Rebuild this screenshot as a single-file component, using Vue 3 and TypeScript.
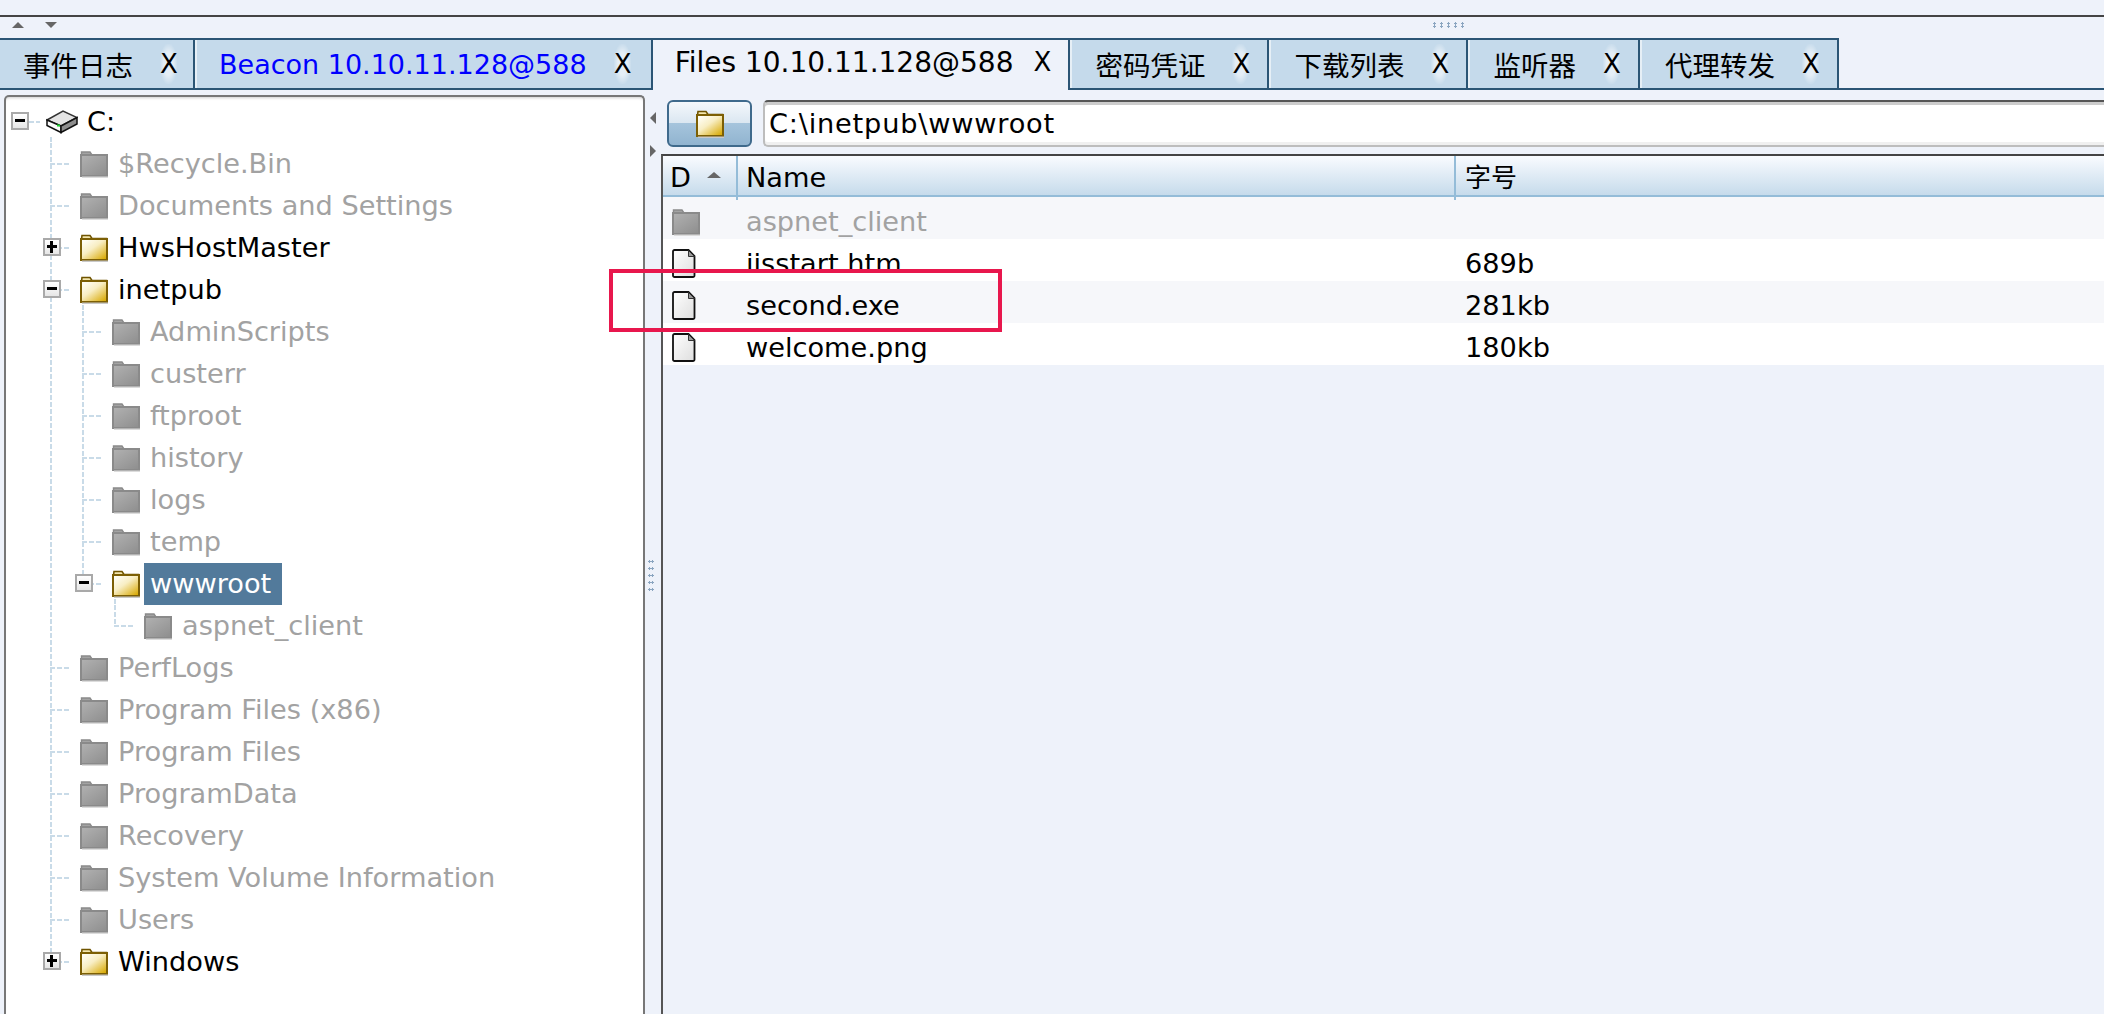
<script setup lang="ts">
interface TreeRow { name: string; level: number; active?: boolean; toggle?: '+' | '-'; selected?: boolean; drive?: boolean }
const rows: TreeRow[] = [
  { name: 'C:', level: 0, active: true, toggle: '-', drive: true },
  { name: '$Recycle.Bin', level: 1 },
  { name: 'Documents and Settings', level: 1 },
  { name: 'HwsHostMaster', level: 1, active: true, toggle: '+' },
  { name: 'inetpub', level: 1, active: true, toggle: '-' },
  { name: 'AdminScripts', level: 2 },
  { name: 'custerr', level: 2 },
  { name: 'ftproot', level: 2 },
  { name: 'history', level: 2 },
  { name: 'logs', level: 2 },
  { name: 'temp', level: 2 },
  { name: 'wwwroot', level: 2, active: true, toggle: '-', selected: true },
  { name: 'aspnet_client', level: 3 },
  { name: 'PerfLogs', level: 1 },
  { name: 'Program Files (x86)', level: 1 },
  { name: 'Program Files', level: 1 },
  { name: 'ProgramData', level: 1 },
  { name: 'Recovery', level: 1 },
  { name: 'System Volume Information', level: 1 },
  { name: 'Users', level: 1 },
  { name: 'Windows', level: 1, active: true, toggle: '+' },
]
const tabs = [
  { label: '事件日志', cjk: true, first: true },
  { label: 'Beacon 10.10.11.128@588', blue: true },
  { label: 'Files 10.10.11.128@588', current: true },
  { label: '密码凭证', cjk: true },
  { label: '下载列表', cjk: true },
  { label: '监听器', cjk: true },
  { label: '代理转发', cjk: true },
]
const files = [
  { name: 'aspnet_client', size: '', folder: true },
  { name: 'iisstart.htm', size: '689b' },
  { name: 'second.exe', size: '281kb' },
  { name: 'welcome.png', size: '180kb' },
]
function indent(r: TreeRow) { return { paddingLeft: (r.level === 0 ? 46 : 74 + (r.level - 1) * 32) + 'px' } }
function hLine(r: TreeRow) {
  const l = r.level === 0 ? 23 : 12 + 32 * r.level
  return { left: l + 'px', width: (r.level === 0 ? 11 : 21) + 'px' }
}
function toggleAt(r: TreeRow) { return { left: (r.level === 0 ? 5 : 5 + 32 * r.level) + 'px' } }
function guides(i: number) {
  const out: { left: string; top: string; height: string }[] = []
  const at = (x: number, top: number, h: number) => out.push({ left: x + 'px', top: top + 'px', height: h + 'px' })
  if (i >= 1 && i <= 20) at(44, 0, i === 20 ? 21 : 42)
  if (i === 0) at(44, 36, 6)
  if (i >= 5 && i <= 11) at(76, 0, i === 11 ? 21 : 42)
  if (i === 4) at(76, 36, 6)
  if (i === 12) at(108, 0, 21)
  if (i === 11) at(108, 36, 6)
  return out
}
</script>

<template>
  <div class="app">
    <svg class="defs" width="0" height="0" aria-hidden="true">
      <defs>
        <linearGradient id="gold" x1="0.1" y1="0.1" x2="0.9" y2="1">
          <stop offset="0" stop-color="#fffef5" />
          <stop offset="0.4" stop-color="#f8eec4" />
          <stop offset="1" stop-color="#d8a800" />
        </linearGradient>
        <linearGradient id="gray" x1="0.1" y1="0" x2="0.9" y2="1">
          <stop offset="0" stop-color="#b0b0b0" />
          <stop offset="1" stop-color="#8f8f8f" />
        </linearGradient>
        <linearGradient id="paper" x1="0" y1="0" x2="1" y2="1">
          <stop offset="0" stop-color="#ffffff" />
          <stop offset="1" stop-color="#dedede" />
        </linearGradient>
        <symbol id="folder-on" viewBox="0 0 28 28">
          <path d="M2 1.500h8l2 3h14.500v1H1.500z" fill="#f3e6ae" stroke="#6f5400" stroke-width="1.600" />
          <rect x="1" y="5" width="26" height="21" fill="url(#gold)" stroke="#7c5f05" stroke-width="2" />
          <rect x="2" y="26.500" width="26" height="1.500" fill="#c9c9c9" />
        </symbol>
        <symbol id="folder-off" viewBox="0 0 28 28">
          <path d="M1.500 6V2h8.500l2 3z" fill="#a3a3a3" stroke="#8a8a8a" stroke-width="1.400" />
          <rect x="1" y="5" width="26" height="21" fill="url(#gray)" stroke="#8a8a8a" stroke-width="2" />
          <rect x="2" y="26.500" width="26" height="1.500" fill="#dcdcdc" />
        </symbol>
        <symbol id="file" viewBox="0 0 24 29">
          <path d="M2.500 1h14l6 6v19.500a1.500 1.500 0 0 1-1.500 1.500H2.500A1.500 1.500 0 0 1 1 26.500V2.500A1.500 1.500 0 0 1 2.500 1z" fill="url(#paper)" stroke="#111" stroke-width="1.800" />
          <path d="M16.500 1.500v6h6z" fill="#999" stroke="#333" stroke-width="1" />
        </symbol>
        <symbol id="drive" viewBox="0 0 32 24">
          <polygon points="1,10 17,1 31,7.500 15,16" fill="#e4e4e4" stroke="#333" stroke-width="1.500" />
          <polygon points="1,10 15,16 15,22.500 1,15.500" fill="#fafafa" stroke="#111" stroke-width="1.500" />
          <polygon points="15,16 31,7.500 31,14 15,22.500" fill="#8d8d8d" stroke="#111" stroke-width="1.500" />
          <rect x="11" y="14.500" width="3" height="2" fill="#18d02a" />
        </symbol>
      </defs>
    </svg>

    <div class="topbar"></div>

    <div class="gripbar">
      <span class="tri up"></span>
      <span class="tri down"></span>
      <span class="hgrip"></span>
    </div>

    <div class="tabstrip">
      <div
        v-for="t in tabs"
        :key="t.label"
        class="tab"
        :class="{ current: t.current, first: t.first, blue: t.blue, cjk: t.cjk }"
      >
        <span class="tab-label">{{ t.label }}</span>
        <span class="tab-x">X</span>
      </div>
    </div>

    <div class="body">
      <div class="tree">
        <div v-for="(r, i) in rows" :key="r.name + i" class="row" :style="indent(r)">
          <span v-for="(g, j) in guides(i)" :key="j" class="vline" :style="g"></span>
          <span class="hline" :style="hLine(r)"></span>
          <span v-if="r.toggle" class="toggle" :style="toggleAt(r)">
            <span class="dash"></span>
            <span v-if="r.toggle === '+'" class="bar"></span>
          </span>
          <svg v-if="r.drive" class="drive-ico"><use href="#drive" /></svg>
          <svg v-else class="folder-ico"><use :href="r.active ? '#folder-on' : '#folder-off'" /></svg>
          <span class="row-name" :class="{ off: !r.active, sel: r.selected, root: r.drive }">{{ r.name }}</span>
        </div>
      </div>

      <div class="splitter">
        <span class="arr left"></span>
        <span class="arr right"></span>
        <span class="vgrip"></span>
      </div>

      <div class="main">
        <div class="toolbar">
          <div class="folder-btn"><svg class="folder-ico"><use href="#folder-on" /></svg></div>
          <div class="path">C:\inetpub\wwwroot</div>
        </div>
        <div class="table">
          <div class="thead">
            <div class="th d">D<span class="sort"></span></div>
            <div class="th">Name</div>
            <div class="th cjk-h">字号</div>
          </div>
          <div v-for="(f, i) in files" :key="f.name" class="tr" :class="{ alt: i % 2 === 0 }">
            <div class="td ic">
              <svg v-if="f.folder" class="folder-ico"><use href="#folder-off" /></svg>
              <svg v-else class="file-ico"><use href="#file" /></svg>
            </div>
            <div class="td name" :class="{ off: f.folder }">{{ f.name }}</div>
            <div class="td">{{ f.size }}</div>
          </div>
        </div>
      </div>
    </div>

    <div class="redbox"></div>
  </div>
</template>

<style>
html, body { margin: 0; background: #eef2fa; overflow: hidden; }
</style>

<style scoped>
.app {
  position: relative;
  width: 2104px;
  height: 1014px;
  overflow: hidden;
  background: #eef2fa;
  font-family: "DejaVu Sans", "Noto Sans CJK SC", sans-serif;
  font-size: 27.200px;
  color: #000;
  display: flex;
  flex-direction: column;
}
.defs { position: absolute; }
.topbar { height: 15px; border-bottom: 2px solid #444; flex: none; }
.gripbar { height: 21px; flex: none; display: flex; align-items: flex-start; position: relative; padding: 5px 0 0 12px; box-sizing: border-box; gap: 21px; }
.tri { width: 0; height: 0; border-left: 6px solid transparent; border-right: 6px solid transparent; }
.tri.up { border-bottom: 6px solid #666; }
.tri.down { border-top: 6px solid #666; }
.hgrip { position: absolute; left: 1431px; top: 5px; width: 36px; height: 6px; background-image: radial-gradient(circle, #8aa5c0 1px, transparent 1.300px); background-size: 7px 3px; }

.tabstrip { height: 52px; flex: none; display: flex; box-sizing: border-box; border-bottom: 2px solid #2b5575; }
.tab {
  height: 52px;
  box-sizing: border-box;
  display: flex;
  align-items: center;
  padding: 0 18px 0 25px;
  gap: 27px;
  background: #c5daeb;
  border-top: 2px solid #2b5575;
  border-bottom: 2px solid #2b5575;
  border-right: 2px solid #2b5575;
  box-shadow: inset 2px 0 0 #e6eff6;
}
.tab.first { box-shadow: none; padding-left: 23px; padding-right: 16px; }
.tab.blue { padding-left: 24px; padding-right: 20px; }
.tab.blue .tab-label { color: #0000ff; font-size: 27px; }
.tab.cjk .tab-label { font-size: 27.500px; }
.tab.current {
  background: #eef2fa;
  border-bottom: 0;
  padding: 0 18px 6px 22px;
  gap: 20px;
  box-shadow: none;
}
.tab.current .tab-label { font-size: 28px; }
.tab-x {
  width: 17px;
  text-align: center;
  font-size: 26px;
  background: radial-gradient(ellipse at center, rgba(255,255,255,.55) 40%, transparent 75%);
  line-height: 40px;
}
.tab.current .tab-x { background: none; }

.body { flex: 1; display: flex; min-height: 0; }
.tree {
  width: 641px;
  margin: 5px 0 0 4px;
  flex: none;
  box-sizing: border-box;
  background: #fff;
  border: 2px solid #777;
  border-bottom: 0;
  border-radius: 5px 5px 0 0;
  padding-top: 4px;
  box-shadow: inset 0 3px 3px -2px #cfcfcf;
}
.row { position: relative; height: 42px; display: flex; align-items: center; box-sizing: border-box; }
.vline { position: absolute; width: 2px; background: repeating-linear-gradient(#c9dbe8 0 5px, transparent 5px 7px); }
.hline { position: absolute; top: 20px; height: 2px; background: repeating-linear-gradient(90deg, #c9dbe8 0 5px, transparent 5px 7px); }
.toggle {
  position: absolute;
  top: 11px;
  width: 18px;
  height: 18px;
  box-sizing: border-box;
  border: 2px solid #a9a9a9;
  background: linear-gradient(#ffffff, #e6e6e6);
}
.dash { position: absolute; left: 2px; right: 2px; top: 5px; height: 2.500px; background: #000; }
.bar { position: absolute; top: 1px; bottom: 1px; left: 5px; width: 2.500px; background: #000; }
.folder-ico { width: 28px; height: 28px; flex: none; }
.drive-ico { width: 32px; height: 24px; flex: none; margin: 0 2px 0 -6px; }
.file-ico { width: 24px; height: 29px; flex: none; }
.row-name { margin-left: 4px; padding: 0 6px; line-height: 42px; white-space: nowrap; }
.row-name.root { margin-left: 1px; }
.off { color: #a2a2a2; }
.row-name.sel { background: #527a9b; color: #fff; padding-right: 11px; }

.splitter { width: 16px; flex: none; position: relative; }
.arr { position: absolute; width: 0; height: 0; border-top: 6px solid transparent; border-bottom: 6px solid transparent; left: 5px; }
.arr.left { top: 22px; border-right: 6px solid #666; }
.arr.right { top: 55px; border-left: 6px solid #666; }
.vgrip { position: absolute; left: 3px; top: 468px; width: 6px; height: 36px; background-image: radial-gradient(circle, #8aa5c0 1px, transparent 1.300px); background-size: 3px 7px; }

.main { flex: 1; min-width: 0; padding-top: 10px; display: flex; flex-direction: column; }
.toolbar { display: flex; gap: 11px; margin-left: 6px; height: 47px; flex: none; }
.folder-btn {
  width: 85px;
  flex: none;
  box-sizing: border-box;
  border: 2px solid #3f6a8c;
  border-radius: 6px;
  background: linear-gradient(#f4f8fc 0%, #dbe7f1 48%, #a5c4dc 50%, #91b4d0 100%);
  display: flex;
  align-items: center;
  justify-content: center;
}
.path {
  flex: 1;
  box-sizing: border-box;
  border: 2px solid #bdbdbd;
  border-top-color: #555;
  border-right: 0;
  border-radius: 5px 0 0 5px;
  background: #fff;
  line-height: 44px;
  padding-left: 4px;
  letter-spacing: 0.800px;
  box-shadow: inset 0 3px 0 #ccc, inset 0 -3px 0 #f0f0f0;
}
.table { margin-top: 7px; flex: 1; border-left: 2px solid #555; border-top: 2px solid #444; }
.thead {
  display: grid;
  grid-template-columns: 73px 718px 1fr;
  height: 41px;
  box-sizing: border-box;
  border-bottom: 2px solid #94bcd8;
  background: linear-gradient(#f9fbff, #c6dbeb);
}
.th { padding-left: 8px; border-left: 2px solid #94bcd8; line-height: 44px; position: relative; }
.th.d { border-left: 0; padding-left: 7px; }
.sort { position: absolute; left: 44px; top: 16px; border-left: 7px solid transparent; border-right: 7px solid transparent; border-bottom: 6px solid #666; }
.cjk-h { font-size: 26px; padding-left: 9px; }
.tr { display: grid; grid-template-columns: 73px 720px 1fr; height: 42px; box-sizing: border-box; padding-top: 7px; background: #fff; align-items: center; }
.tr.alt { background: #f6f7fa; }
.td { padding-left: 9px; white-space: nowrap; line-height: 35px; }
.td.name { padding-left: 10px; }
.td.ic { display: flex; align-items: center; }
.redbox {
  position: absolute;
  left: 609px;
  top: 269px;
  width: 393px;
  height: 63px;
  box-sizing: border-box;
  border: 4px solid #e8174d;
}
</style>
